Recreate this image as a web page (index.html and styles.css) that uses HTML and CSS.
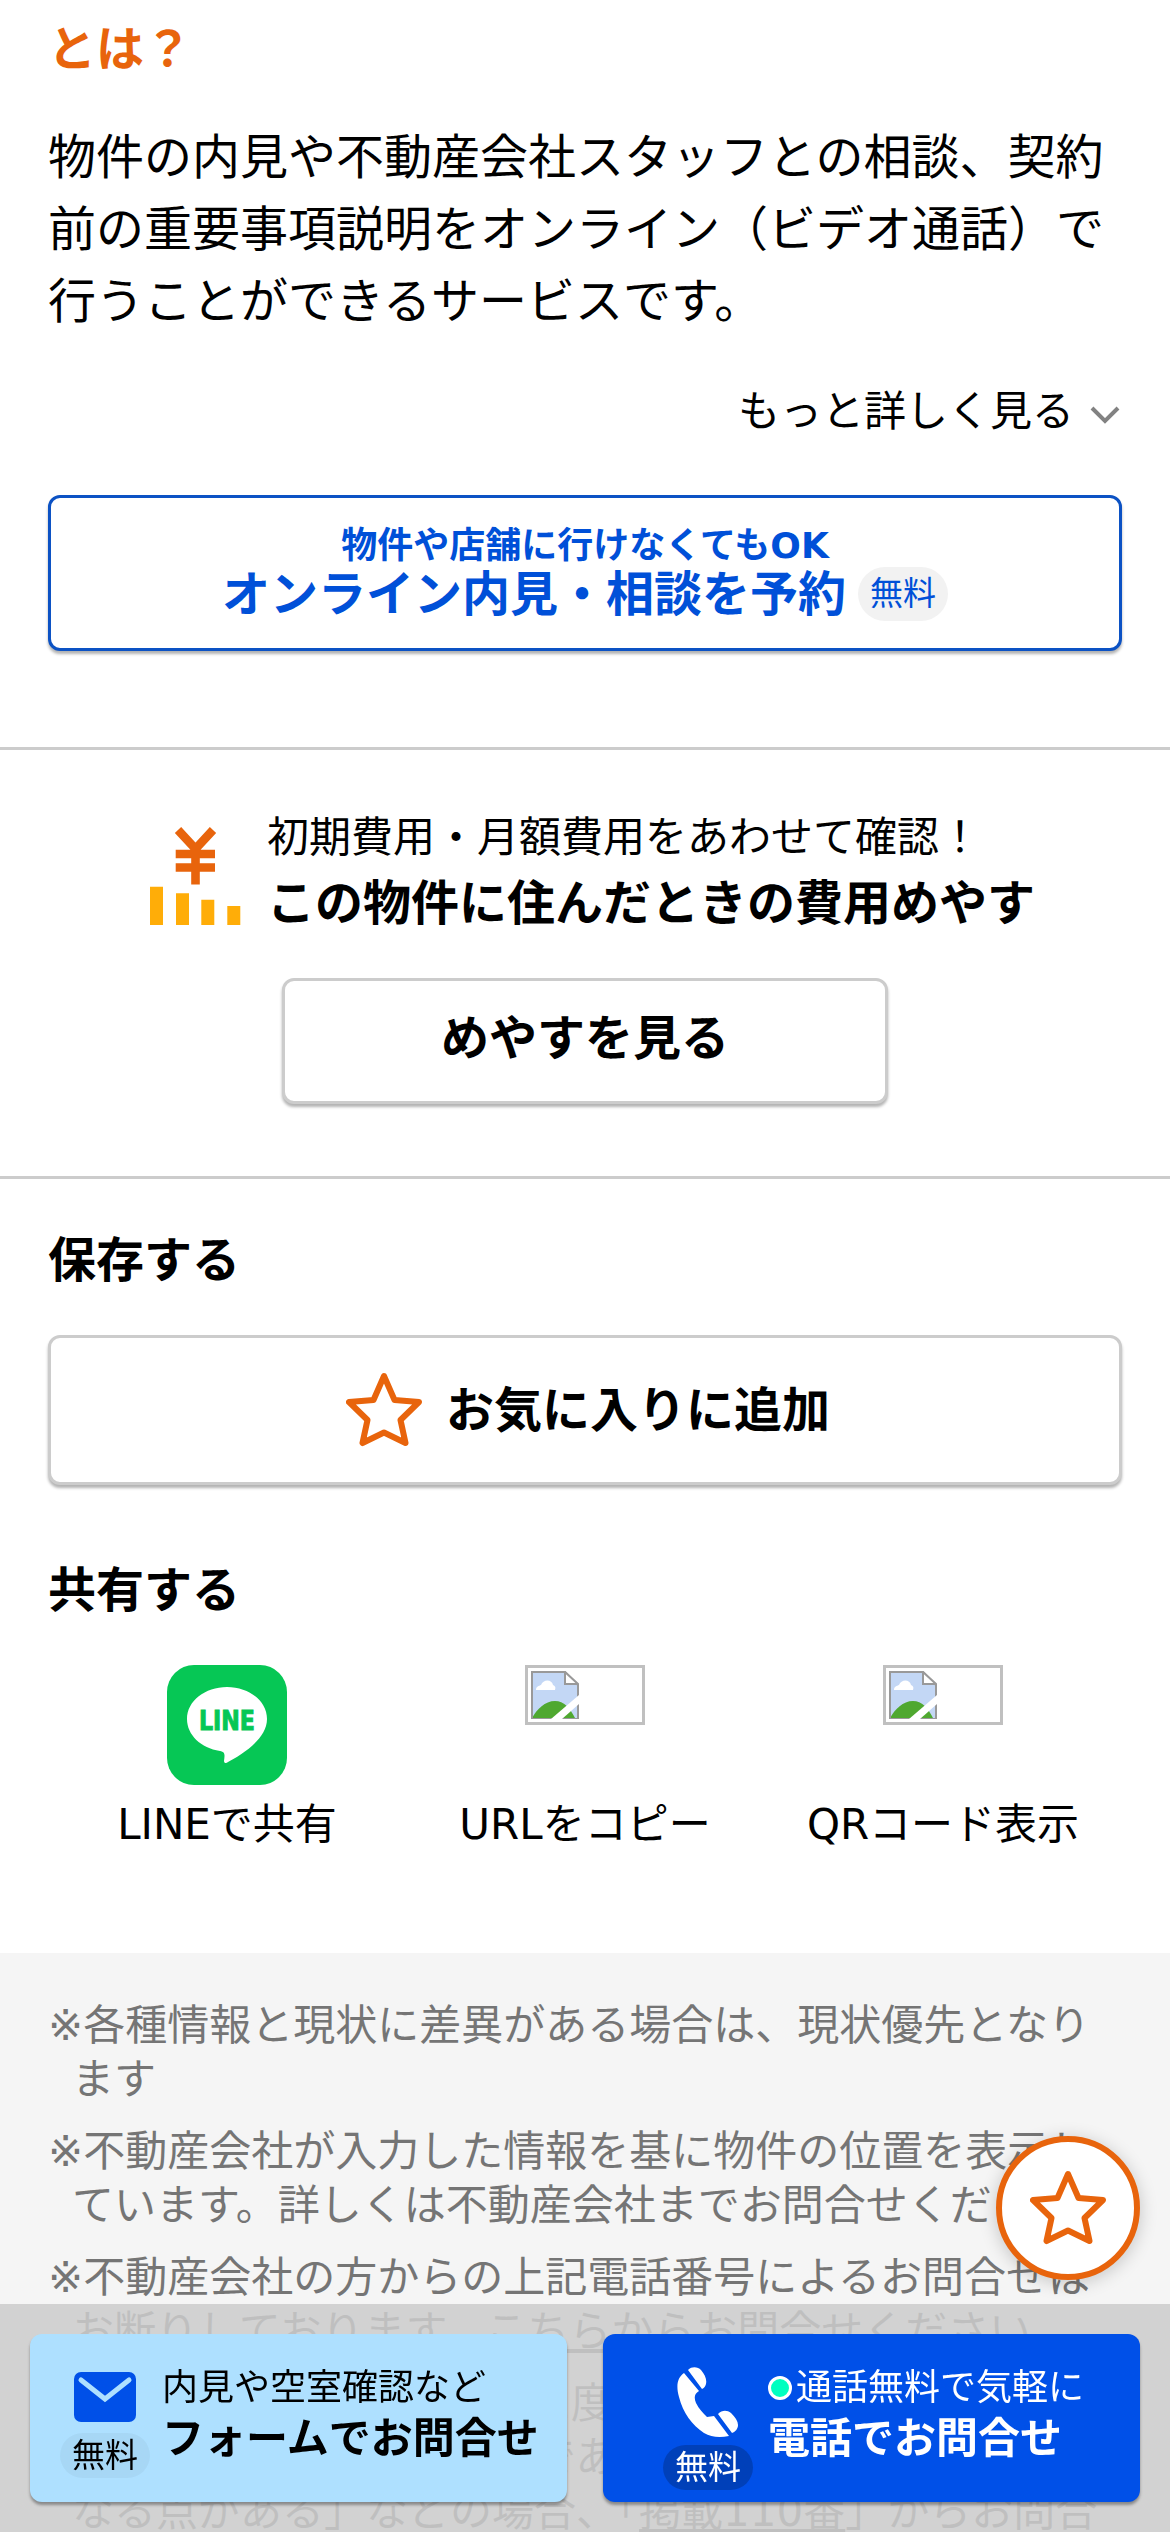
FILE: index.html
```html
<!DOCTYPE html>
<html lang="ja">
<head>
  <meta charset="UTF-8">
  <meta name="viewport" content="width=device-width, initial-scale=1.0">
  <title>オンライン内見・相談</title>
  <link rel="stylesheet" href="styles.css">
</head>
<body>

  <section class="online">
    <h2 class="online-title">とは？</h2>
    <p class="online-text">物件の内見や不動産会社スタッフとの相談、契約前の重要事項説明をオンライン（ビデオ通話）で行うことができるサービスです。</p>
    <a class="more">もっと詳しく見る
      <svg class="more-icon" viewBox="0 0 30 20"><path d="M2 3 L15 16 L28 3" fill="none" stroke="#828282" stroke-width="4"/></svg>
    </a>
    <a class="btn btn-online">
      <span class="btn-online-sub">物件や店舗に行けなくてもOK</span>
      <span class="btn-online-main">オンライン内見・相談を予約<span class="free">無料</span></span>
    </a>
  </section>

  <section class="cost">
    <div class="cost-head">
      <svg class="cost-icon" viewBox="0 0 92 100">
        <path d="M28 4 L45.5 23 L63 4 M25.7 28 H65 M25.7 41.5 H65 M45.5 22 V58.5" fill="none" stroke="#e8640c" stroke-width="8.6"/>
        <path d="M0 60.7h13V99H0z M26 67.3h13V99H26z M51.3 73.7h13V99h-13z M77.3 80h13v19h-13z" fill="#ffad08"/>
      </svg>
      <div>
        <p class="cost-sub">初期費用・月額費用をあわせて確認！</p>
        <h2 class="cost-title">この物件に住んだときの費用めやす</h2>
      </div>
    </div>
    <a class="btn btn-cost">めやすを見る</a>
  </section>

  <section class="save">
    <h2 class="heading">保存する</h2>
    <a class="btn btn-save">
      <svg class="star" viewBox="0 0 76 76"><path d="M38 4 L48.5 28 L73 30 L54.5 48 L59.5 71 L38 60.5 L16.5 71 L21.5 48 L3 30 L27.5 28 Z" fill="none" stroke="#e8640c" stroke-width="6" stroke-linejoin="round"/></svg>
      お気に入りに追加
    </a>
    <h2 class="heading heading-share">共有する</h2>
    <ul class="share">
      <li>
        <div class="share-icon">
          <svg width="120" height="120" viewBox="0 0 120 120">
            <rect width="120" height="120" rx="27" fill="#06c755"/>
            <path d="M100 54 C100 36 82 22 60 22 S20 36 20 54 C20 70 34 83 53 86 C58 87 58 89 57 96 C57 98 59 99 61 97 C72 91 100 75 100 54Z" fill="#fff"/>
            <text class="line-logo" x="60" y="65" text-anchor="middle" textLength="56" lengthAdjust="spacingAndGlyphs">LINE</text>
          </svg>
        </div>
        LINEで共有
      </li>
      <li>
        <div class="share-icon">
          <div class="no-image"><svg class="no-image-icon" viewBox="0 0 48 48"><path d="M1 1H35L47 13V47H1Z" fill="#c3d7f5"/><path d="M1 47C6 38 14 30 24 30C33 30 39 37 44 47Z" fill="#4fa830"/><path d="M5 19C5 15 8 15 10 14C12 8 21 8 22 14C24 15 25 16 24 19Z" fill="#fff"/><path d="M1 48V1H34L47 14V48Z" fill="none" stroke="#999" stroke-width="2"/><path d="M34 1V13H47Z" fill="#fff" stroke="#999" stroke-width="2"/><path d="M48 24V33L31 48H20Z" fill="#fff"/></svg></div>
        </div>
        URLをコピー
      </li>
      <li>
        <div class="share-icon">
          <div class="no-image"><svg class="no-image-icon" viewBox="0 0 48 48"><path d="M1 1H35L47 13V47H1Z" fill="#c3d7f5"/><path d="M1 47C6 38 14 30 24 30C33 30 39 37 44 47Z" fill="#4fa830"/><path d="M5 19C5 15 8 15 10 14C12 8 21 8 22 14C24 15 25 16 24 19Z" fill="#fff"/><path d="M1 48V1H34L47 14V48Z" fill="none" stroke="#999" stroke-width="2"/><path d="M34 1V13H47Z" fill="#fff" stroke="#999" stroke-width="2"/><path d="M48 24V33L31 48H20Z" fill="#fff"/></svg></div>
        </div>
        QRコード表示
      </li>
    </ul>
  </section>

  <ul class="notes">
    <li>※各種情報と現状に差異がある場合は、現状優先となります</li>
    <li>※不動産会社が入力した情報を基に物件の位置を表示しています。詳しくは不動産会社までお問合せください</li>
    <li>※不動産会社の方からの上記電話番号によるお問合せはお断りしております。<u>こちら</u>からお問合せください。</li>
    <li>※お問合せの前に必ずもう1度<br>募集終了や誤った情報等である<br>なる点がある」などの場合、「<u>掲載110番</u>」からお問合</li>
  </ul>

  <a class="float-star">
    <svg class="star" viewBox="0 0 76 76"><path d="M38 4 L48.5 28 L73 30 L54.5 48 L59.5 71 L38 60.5 L16.5 71 L21.5 48 L3 30 L27.5 28 Z" fill="none" stroke="#e8640c" stroke-width="6" stroke-linejoin="round"/></svg>
  </a>

  <div class="footer">
    <a class="contact contact-form">
      <span class="contact-icon">
        <svg width="62" height="50" viewBox="0 0 62 50"><rect width="62" height="50" rx="7" fill="#0050e8"/><path d="M7 8 L31 27 L55 8" fill="none" stroke="#aee0ff" stroke-width="5" stroke-linecap="round"/></svg>
        <span class="free free-form">無料</span>
      </span>
      <span class="contact-text">
        <span class="contact-sub">内見や空室確認など</span>
        <span class="contact-main">フォームでお問合せ</span>
      </span>
    </a>
    <a class="contact contact-tel">
      <span class="contact-icon">
        <svg width="62" height="70" viewBox="0 0 62 70">
          <path d="M7 6 L22 24 C17 27 17 31 19 36 C22 42 26 46 30 50 L37 49 L52 69 C42 71 34 70 27 66 C15 58 6 46 2 30 C-1 19 0 11 7 6Z" fill="#fff"/>
          <path d="M11 3 C15 -1 21 0 24 3 C28 8 30 12 29 17 C28 20 27 21 25 22Z M41 47 C45 43 50 43 54 46 C58 50 61 54 61 58 C61 62 58 65 55 66Z" fill="#fff"/>
        </svg>
        <span class="free free-tel">無料</span>
      </span>
      <span class="contact-text">
        <span class="contact-sub"><i class="dot"></i>通話無料で気軽に</span>
        <span class="contact-main">電話でお問合せ</span>
      </span>
    </a>
  </div>

</body>
</html>
```
FILE: styles.css
```css
* {
  box-sizing: border-box;
}

html, body {
  margin: 0;
  padding: 0;
  height: 2532px;
  overflow: hidden;
}

body {
  background-color: #fff;
  color: #000;
  font-family: "DejaVu Sans", "Noto Sans CJK JP", sans-serif;
  font-size: 42px;
  line-height: 54px;
}

h2, p, ul {
  margin: 0;
  padding: 0;
}

li {
  list-style: none;
}

svg {
  display: block;
}

.btn {
  display: flex;
  justify-content: center;
  align-items: center;
  background-color: #fff;
  border: 3px solid #ccc;
  border-radius: 12px;
  box-shadow: 0 3px 3px rgba(0, 0, 0, 0.3);
  font-size: 48px;
  font-weight: bold;
}

.online {
  padding: 13px 48px 0;
  height: 750px;
  border-bottom: 3px solid #ccc;
}

.online-title {
  color: #e8640c;
  font-size: 48px;
  line-height: 72px;
}

.online-text {
  margin-top: 36px;
  font-size: 48px;
  line-height: 72px;
}

.more {
  display: flex;
  justify-content: flex-end;
  align-items: center;
  height: 64px;
  margin-top: 43px;
}

.more-icon {
  width: 30px;
  height: 20px;
  margin: 6px 2px 0 16px;
}

.btn-online {
  flex-direction: column;
  height: 156px;
  margin-top: 51px;
  border-color: #0c52c4;
  color: #0050d8;
}

.btn-online-sub {
  font-size: 36px;
  line-height: 42px;
}

.btn-online-main {
  display: flex;
  align-items: center;
  line-height: 54px;
}

.free {
  margin-left: 12px;
  padding: 0 12px;
  border-radius: 27px;
  background-color: #f2f2f2;
  font-size: 33px;
  font-weight: normal;
  line-height: 54px;
}

.cost {
  height: 429px;
  padding-top: 61px;
  border-bottom: 3px solid #ccc;
}

.cost-head {
  display: flex;
  padding-left: 150px;
}

.cost-icon {
  width: 92px;
  height: 100px;
  margin: 15px 25px 0 0;
}

.cost-sub {
  line-height: 54px;
}

.cost-title {
  margin-top: 2px;
  font-size: 48px;
  line-height: 72px;
}

.btn-cost {
  width: 606px;
  height: 126px;
  margin: 39px auto 0;
  padding-bottom: 6px;
}

.save {
  height: 774px;
  padding: 45px 48px 0;
}

.heading {
  font-size: 48px;
  line-height: 72px;
}

.btn-save {
  height: 150px;
  margin-top: 39px;
  padding-left: 6px;
}

.star {
  width: 76px;
  height: 76px;
}

.btn-save .star {
  margin-right: 24px;
}

.heading-share {
  margin-top: 69px;
}

.share {
  display: flex;
  margin-top: 39px;
}

.share li {
  flex: 1;
  text-align: center;
}

.share-icon {
  display: flex;
  justify-content: center;
  height: 133px;
}

.line-logo {
  fill: #06c755;
  stroke: #06c755;
  stroke-width: 1px;
  font-family: "DejaVu Sans", sans-serif;
  font-size: 26px;
  font-weight: bold;
}

.no-image {
  width: 120px;
  height: 60px;
  padding: 3px;
  border: 3px solid #c0c0c0;
}

.no-image-icon {
  width: 48px;
  height: 48px;
}

.notes {
  height: 579px;
  padding: 46px 48px 0;
  background-color: #f5f5f5;
  color: #757575;
}

.notes li {
  margin-bottom: 18px;
  padding-left: 24px;
  text-indent: -24px;
}

.float-star {
  position: fixed;
  top: 2136px;
  right: 30px;
  display: flex;
  justify-content: center;
  align-items: center;
  width: 144px;
  height: 144px;
  border: 6px solid #e8640c;
  border-radius: 50%;
  background-color: #fff;
  box-shadow: 0 3px 18px rgba(0, 0, 0, 0.2);
}

.footer {
  position: fixed;
  left: 0;
  right: 0;
  bottom: 0;
  display: flex;
  justify-content: space-between;
  height: 228px;
  padding: 30px;
  background-color: rgba(204, 204, 204, 0.86);
}

.contact {
  display: flex;
  width: 537px;
  height: 168px;
  border-radius: 12px;
  box-shadow: 0 3px 3px rgba(0, 0, 0, 0.35);
}

.contact-form {
  padding-left: 30px;
  background-color: #aee0ff;
}

.contact-tel {
  padding-left: 60px;
  background-color: #0050e8;
  color: #fff;
}

.contact-icon {
  display: flex;
  flex-direction: column;
  align-items: center;
  width: 90px;
  padding-top: 38px;
}

.contact-tel .contact-icon {
  padding-top: 33px;
}

.contact-text {
  padding: 32px 0 0 12px;
}

.contact-tel .contact-text {
  padding-left: 15px;
}

.contact-sub {
  display: flex;
  align-items: center;
  font-size: 36px;
  line-height: 44px;
}

.contact-main {
  display: block;
  margin-top: 1px;
  font-size: 42px;
  font-weight: bold;
  line-height: 56px;
}

.free-form, .free-tel {
  margin: 11px 0 0;
  background-color: rgba(0, 0, 0, 0.04);
  line-height: 45px;
}

.free-tel {
  margin-top: 8px;
  background-color: rgba(0, 0, 0, 0.2);
}

.dot {
  width: 24px;
  height: 24px;
  margin-right: 4px;
  border: 3px solid #fff;
  border-radius: 50%;
  background-color: #00ffc0;
}
```
